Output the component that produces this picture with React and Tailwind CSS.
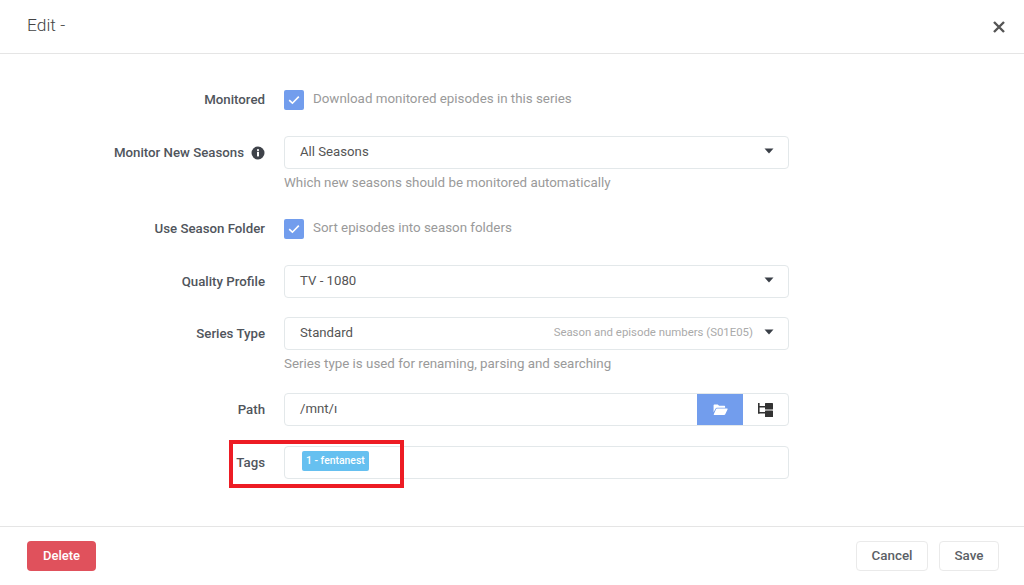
const font = "font-['Roboto',sans-serif]";

function Check() {
  return (
    <span className="flex h-[20px] w-[20px] shrink-0 items-center justify-center rounded-[2px] bg-[#729ded]">
      <svg width="12" height="10" viewBox="0 0 12 10" fill="none" stroke="#fff" strokeWidth="1.6">
        <path d="M1.2 5.2 L4.4 8.2 L10.8 1.6" />
      </svg>
    </span>
  );
}

function Caret() {
  return (
    <svg width="10" height="6" viewBox="0 0 10 6" className="mb-[3px] shrink-0">
      <path d="M0.5 0.5 H9.5 L5 5.5 Z" fill="#3a3f47" />
    </svg>
  );
}

function Row({ label, info, children, help, className = "" }) {
  return (
    <div className={`flex ${className}`}>
      <div className="flex h-[33px] w-[265px] shrink-0 items-center justify-end text-[13.25px] font-medium text-[#50555c]">
        <span>{label}</span>
        {info && (
          <svg width="14" height="14" viewBox="0 0 14 14" className="ml-[7px]">
            <circle cx="7" cy="7" r="6.5" fill="#3f434a" />
            <rect x="6" y="5.8" width="2" height="4.6" fill="#fff" />
            <rect x="6" y="3.2" width="2" height="1.7" fill="#fff" />
          </svg>
        )}
      </div>
      <div className="ml-[19px] w-[505px]">
        {children}
        {help && <div className="mt-[5px] h-[18px] text-[13.35px] leading-[18px] text-[#9a9a9a]">{help}</div>}
      </div>
    </div>
  );
}

function Select({ value, hint }) {
  return (
    <div className="flex h-[33px] items-center rounded-[4px] border border-[#e3e8ea] pl-[15px] pr-[14px] text-[13.2px] text-[#555]">
      <span className="flex-1 pb-[2px]">{value}</span>
      {hint && <span className="mr-[11px] pb-[1px] text-[11.4px] text-[#aaa]">{hint}</span>}
      <Caret />
    </div>
  );
}

export default function App() {
  return (
    <div className={`flex h-[585px] w-[1024px] flex-col overflow-hidden bg-white ${font}`}>
      <header className="flex h-[54px] shrink-0 items-center justify-between border-b border-[#e5e5e5] pl-[27px] pr-[19px]">
        <h1 className="pb-[2px] text-[17.4px] font-light text-[#444]">Edit -</h1>
        <svg width="12" height="12" viewBox="0 0 12 12" stroke="#555" strokeWidth="2.4">
          <path d="M1 1 L11 11 M11 1 L1 11" />
        </svg>
      </header>

      <main className="flex-1 pt-[29px]">
        <Row label="Monitored">
          <div className="flex h-[33px] items-center">
            <Check />
            <span className="ml-[9px] text-[13.35px] text-[#9a9a9a]">Download monitored episodes in this series</span>
          </div>
        </Row>
        <Row className="mt-[20px]" label="Monitor New Seasons" info help="Which new seasons should be monitored automatically">
          <Select value="All Seasons" />
        </Row>
        <Row className="mt-[20px]" label="Use Season Folder">
          <div className="flex h-[33px] items-center">
            <Check />
            <span className="ml-[9px] text-[13.35px] text-[#9a9a9a]">Sort episodes into season folders</span>
          </div>
        </Row>
        <Row className="mt-[20px]" label="Quality Profile">
          <Select value="TV - 1080" />
        </Row>
        <Row className="mt-[19px]" label="Series Type" help="Series type is used for renaming, parsing and searching">
          <Select value="Standard" hint="Season and episode numbers (S01E05)" />
        </Row>
        <Row className="mt-[20px]" label="Path">
          <div className="flex h-[33px] overflow-hidden rounded-[4px] border border-[#e3e8ea] text-[13.2px] text-[#555]">
            <div className="flex flex-1 items-center pb-[1px] pl-[15px]">
              <span>/mnt/ı</span>
            </div>
            <span className="flex w-[46px] items-center justify-center bg-[#729ded]">
              <svg width="15" height="12" viewBox="0 0 16 13">
                <path d="M0.5 1.5 C0.5 1 1 .5 1.5 .5 H5 L6.5 2 H12 C12.5 2 13 2.5 13 3 V4 H4 C3.4 4 3 4.3 2.7 4.8 L.5 9 Z" fill="#fff" />
                <path d="M4 5 H15 C15.6 5 15.9 5.5 15.6 6 L13 11.5 C12.8 11.9 12.4 12 12 12 H1.2 C.7 12 .5 11.6 .7 11.2 L3.3 5.5 C3.4 5.2 3.7 5 4 5 Z" fill="#fff" />
              </svg>
            </span>
            <span className="flex w-[45px] items-center justify-center">
              <svg width="15" height="14" viewBox="0 0 15 14" fill="#333">
                <rect x="0" y="0" width="1.6" height="10.5" />
                <rect x="0" y="3" width="7" height="1.5" />
                <rect x="0" y="9" width="7" height="1.5" />
                <rect x="7" y="0" width="8" height="6.5" rx="0.6" />
                <rect x="7" y="7.5" width="8" height="6.5" rx="0.6" />
              </svg>
            </span>
          </div>
        </Row>
        <Row className="mt-[20px]" label="Tags">
          <div className="flex h-[33px] rounded-[4px] border border-[#e3e8ea] pl-[17px] pt-[4px]">
            <span className="flex h-[20px] items-center rounded-[2px] bg-[#66c0f0] px-[4px] pb-[1px] text-[10.4px] font-medium text-white">1 - fentanest</span>
          </div>
        </Row>
      </main>

      <footer className="flex h-[59px] shrink-0 items-start justify-between border-t border-[#e5e5e5] pl-[27px] pr-[25px] pt-[14px]">
        <button className="h-[30px] w-[69px] rounded-[4px] bg-[#e0515c] text-[13px] font-medium text-white">Delete</button>
        <div className="flex gap-[11px]">
          <button className="h-[30px] w-[72px] rounded-[4px] border border-[#eaeaea] text-[13.4px] font-medium text-[#5b5f66]">Cancel</button>
          <button className="h-[30px] w-[60px] rounded-[4px] border border-[#eaeaea] text-[13.4px] font-medium text-[#5b5f66]">Save</button>
        </div>
      </footer>

      <div className="pointer-events-none absolute left-[229px] top-[440px] h-[48px] w-[175px] border-[4px] border-[#ed1c24]" />
    </div>
  );
}
